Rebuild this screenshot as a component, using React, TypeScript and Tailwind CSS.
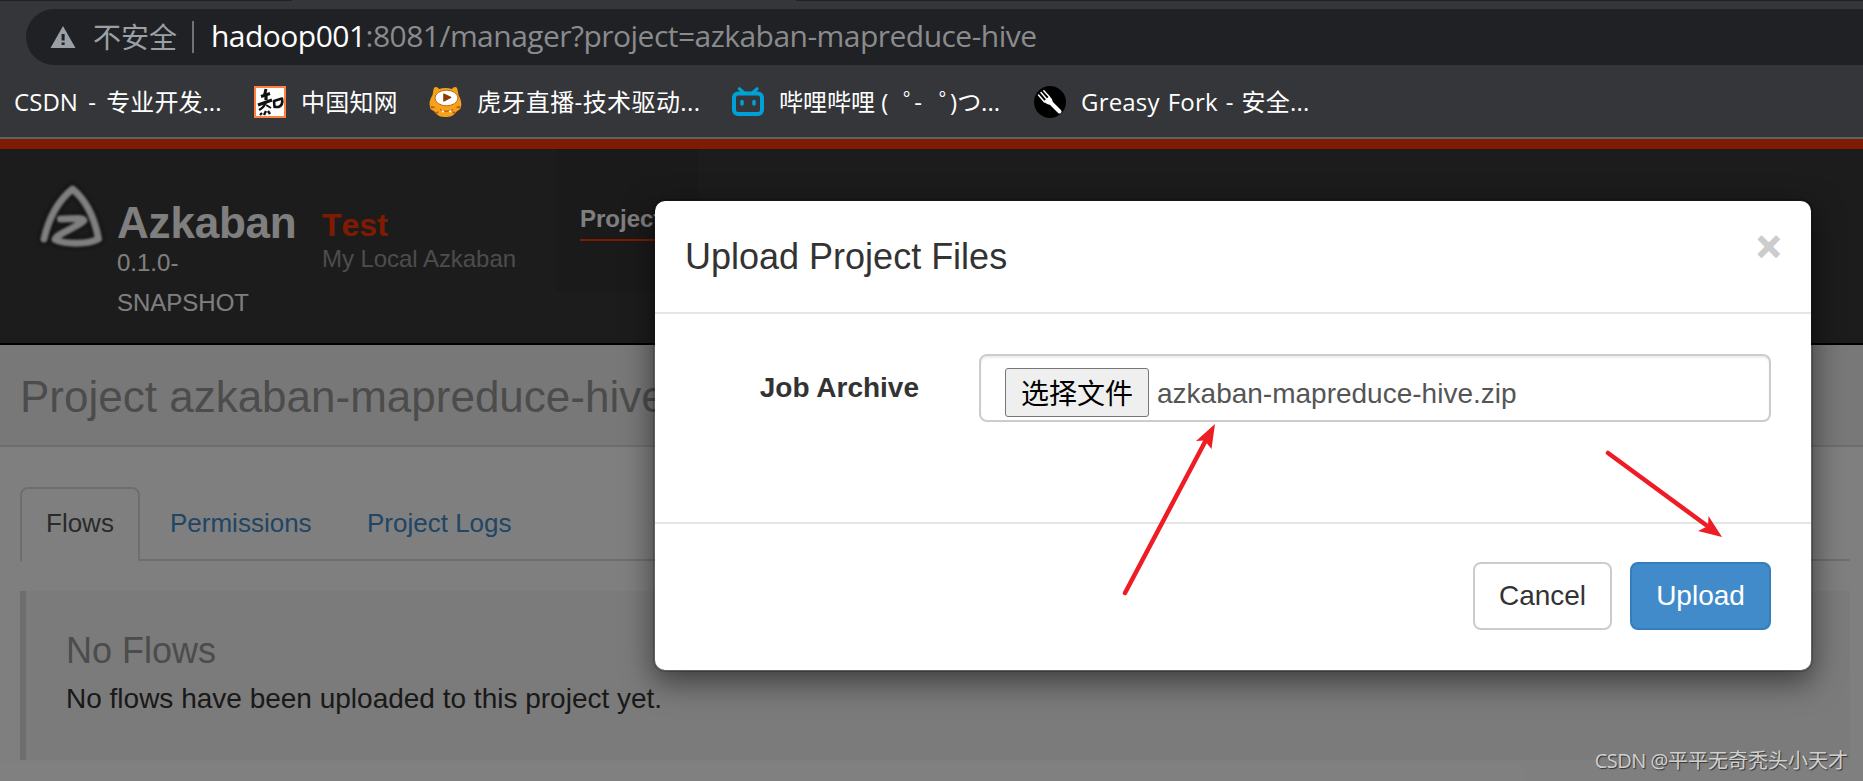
import type { ReactNode } from 'react';

function WarningIcon() {
    return (
        <svg width="26" height="22" viewBox="0 0 26 22" className="shrink-0">
            <path d="M13 0 L25.5 22 H0.5 Z" fill="#9aa0a6" />
            <path d="M11.6 8 h3 v6.5 h-3 z M11.6 16.5 h3 v2.6 h-3 z" fill="#202124" />
        </svg>
    );
}

function CnkiIcon() {
    return (
        <svg width="32" height="32" viewBox="0 0 32 32" className="shrink-0">
            <rect x="1" y="1" width="30" height="30" fill="#fff" stroke="#ff8040" strokeWidth="2" />
            <g fill="none" stroke="#111" strokeWidth="2" strokeLinejoin="round">
                <path d="M12 3 L10.500 9 M7 10.500 L16 7.500" strokeWidth="3" />
                <path d="M12 7 V14 M4 19 L18 14" strokeWidth="3.200" />
                <path d="M12 15 C11 20 9 22 5 24 M10 29 L12 25 M16 28 L14 25 M6 29 L8 27" strokeWidth="2.400" />
                <path d="M12 19 L17 22" strokeWidth="2" />
                <path d="M20 15 L28 12.500 C29 17 27 20 24.500 21 L20.500 21 Z" strokeWidth="2.600" />
            </g>
        </svg>
    );
}

function HuyaIcon() {
    return (
        <svg width="33" height="31" viewBox="0 0 33 31" className="shrink-0">
            <path
                d="M5 2 C6 0 9 1 10 3 C14 1.5 19 1.5 23 3 C24 1 27 0 28 2 C29 5 29 7 29.500 9 C32 13 33 18 32 21 C31 24 30 24 28 25 C25 30 21 31 16.500 31 C12 31 8 30 5 25 C2 24 1 23 .8 20 C0 17 1 13 3.500 9 C4 7 4 5 5 2 Z"
                fill="#f7a11b"
            />
            <path d="M1.500 20 L7 21 L2.500 22.500 Z M31.500 20 L26 21 L30.500 22.500 Z M6 26 L10 25.500 L8 28 Z M27 26 L23 25.500 L25 28 Z" fill="#b5560a" />
            <ellipse cx="17.500" cy="12" rx="11.500" ry="7.800" fill="#fff" stroke="#c06a10" strokeWidth="1" />
            <path d="M15 7.500 C14.500 7.200 14.200 7.500 14.200 8 V15 C14.200 15.700 14.700 15.900 15.300 15.500 L22 12 C22.600 11.600 22.600 11.200 22 10.800 Z" fill="#8a3c07" />
            <path d="M11 23.500 C15 25.800 20 25.800 24 23.500" fill="none" stroke="#a34a08" strokeWidth="1" />
            <path d="M12.500 24 L15.500 25 L13.600 27 Z M22.500 24 L19.500 25 L21.400 27 Z" fill="#fff" />
        </svg>
    );
}

function BilibiliIcon() {
    return (
        <svg width="32" height="29" viewBox="0 0 32 29" className="shrink-0">
            <g fill="none" stroke="#00a1d6" strokeLinecap="round">
                <path d="M7.500 1.800 L11.500 5.500 M25 1.800 L21 5.500" strokeWidth="3.200" />
                <rect x="2" y="6.500" width="28" height="20.500" rx="4" strokeWidth="4" />
                <path d="M10 14.500 V17 M22 14.500 V17" strokeWidth="3.600" />
            </g>
        </svg>
    );
}

function ForkIcon() {
    return (
        <svg width="32" height="32" viewBox="0 0 32 32" className="shrink-0">
            <circle cx="16" cy="16" r="16" fill="#000" />
            <path d="M17 17 L25.500 25.500" stroke="#fff" strokeWidth="4" strokeLinecap="round" />
            <path d="M10 15 L15 10.500 C18 12 19 14 18.500 18.500 C14 19 12 18 10 15 Z" fill="#fff" />
            <path d="M4.500 9 L10.500 16 M7 6.500 L13 13.500 M9.800 4.800 L15.500 11" stroke="#fff" strokeWidth="1.500" strokeLinecap="round" />
        </svg>
    );
}

const logoPath =
    'M44 239 C49 217 59 200 72.500 189 C87 201 95 220 98.500 239 C88 244.500 64 244.500 55 239.500 C56 234 80 226 84 220.500 C83 217 70 219 60.500 219';

function AzkabanLogo() {
    return (
        <svg width="76" height="76" viewBox="34 178 76 76" className="shrink-0">
            <g fill="none" strokeLinecap="round" strokeLinejoin="round">
                <path d={logoPath} stroke="#000" strokeOpacity="0.35" strokeWidth="12" className="blur-[2px]" />
                <path d={logoPath} stroke="#fff" strokeWidth="7" className="blur-[0.8px]" />
            </g>
        </svg>
    );
}

interface BookmarkProps {
    icon?: ReactNode;
    className: string;
    children: ReactNode;
}

function Bookmark({ icon, className, children }: BookmarkProps) {
    return (
        <div className={`flex items-center shrink-0 gap-[15px] ${className}`}>
            {icon}
            <span className="whitespace-nowrap">{children}</span>
        </div>
    );
}

function BrowserChrome() {
    return (
        <div className="h-[139px] bg-[#35363a] border-b-2 border-[#5f6368] flex flex-col font-['Open_Sans','Noto_Sans_CJK_SC',sans-serif]">
            <div className="flex justify-between h-px mb-2">
                <div className="w-[292px] bg-[#202124]" />
                <div className="w-[1067px] bg-[#202124]" />
            </div>
            <div className="ml-[26px] h-14 shrink-0 rounded-l-full bg-[#202124] flex items-center pl-6 text-[30px]">
                <WarningIcon />
                <span className="ml-[17px] w-[86px] text-[28px] text-[#9aa0a6] whitespace-nowrap">不安全</span>
                <div className="ml-[13px] w-0.5 h-8 bg-[#6f7276]" />
                <span className="ml-[17px] pb-[3px] tracking-[-0.53px] text-[#8a8b8d] whitespace-nowrap">
                    <span className="text-white">hadoop001</span>:8081/manager?project=azkaban-mapreduce-hive
                </span>
            </div>
            <div className="flex items-center h-[72px] pt-px pl-3.5 text-2xl text-white">
                <Bookmark className="w-[240px] [word-spacing:4px] tracking-[0.05px]">CSDN - 专业开发...</Bookmark>
                <Bookmark className="w-[175px] tracking-[0.2px]" icon={<CnkiIcon />}>中国知网</Bookmark>
                <Bookmark className="w-[303px] tracking-[0.4px]" icon={<HuyaIcon />}>虎牙直播-技术驱动...</Bookmark>
                <Bookmark className="w-[302px]" icon={<BilibiliIcon />}>
                    哔哩哔哩 (<span className="pl-[15px] tracking-[-13px]">゜</span>-<span className="pl-[17px] tracking-[-13px]">゜</span>)つ...
                </Bookmark>
                <Bookmark className="w-[300px] [word-spacing:1.5px] tracking-[0.2px]" icon={<ForkIcon />}>Greasy Fork - 安全...</Bookmark>
            </div>
        </div>
    );
}

function SiteHeader() {
    return (
        <div className="h-[206px] border-t-[10px] border-t-[#ff3600] border-b-2 border-b-black bg-[#393939] flex items-start">
            <div className="pl-[34px] pt-[29px] w-[117px]">
                <AzkabanLogo />
            </div>
            <div className="w-[205px] pt-[52px] text-white">
                <div className="h-[42px] text-[44px] leading-[44px] font-bold tracking-[-0.2px]">Azkaban</div>
                <div className="w-[140px] text-2xl leading-[40px]">0.1.0-SNAPSHOT</div>
            </div>
            <div className="w-[234px] pt-[59px]">
                <div className="text-[32px] leading-[34px] font-bold text-[#ff3600] [font-kerning:none]">Test</div>
                <div className="text-2xl leading-[33px] tracking-[-0.05px] text-[#999]">My Local Azkaban</div>
            </div>
            <div className="w-[143px] h-[142px] bg-[#343434] pt-[49px] px-6">
                <div className="h-[43px] border-b-2 border-[#ff3600] text-2xl leading-[41px] font-bold text-white">Projects</div>
            </div>
        </div>
    );
}

function ProjectPage() {
    return (
        <div className="flex-1 bg-white">
            <div className="h-[102px] bg-[#f1f1f1] border-b-2 border-[#ddd] pl-5">
                <h1 className="text-[44px] leading-[104px] text-[#999] whitespace-nowrap">Project azkaban-mapreduce-hive</h1>
            </div>
            <div className="pl-5 pr-[13px] pt-10">
                <div className="flex text-[26px] leading-[68px] h-[74px]">
                    <div className="w-[120px] shrink-0 border-2 border-b-0 border-[#ddd] rounded-t-lg pl-6 text-[#555]">Flows</div>
                    <div className="flex-1 flex border-b-2 border-[#ddd] pt-0.5 text-[#428bca]">
                        <div className="pl-[30px] w-[227px]">Permissions</div>
                        <div>Project Logs</div>
                    </div>
                </div>
                <div className="mt-[30px] h-[169px] border-l-[6px] border-[#ddd] bg-[#f6f6f6] pl-10 pt-[38px]">
                    <h4 className="text-[36px] leading-[44px] text-[#999]">No Flows</h4>
                    <p className="mt-1.5 text-[28px] leading-[40px] text-[#333]">No flows have been uploaded to this project yet.</p>
                </div>
            </div>
        </div>
    );
}

function UploadModal() {
    return (
        <div className="absolute left-[653px] top-[199px] w-[1160px] h-[473px] flex flex-col rounded-xl border-2 border-black/20 bg-white bg-clip-padding shadow-[0_10px_30px_rgba(0,0,0,0.5)] text-[#333]">
            <div className="h-[113px] border-b-2 border-[#e5e5e5] flex justify-between pl-[30px] pr-[30px]">
                <h4 className="text-[36px] leading-[111px]">Upload Project Files</h4>
                <button className="h-[92px] text-[42px] leading-[92px] font-bold text-[#ccc] [-webkit-text-stroke:1.2px_#ccc]">×</button>
            </div>
            <div className="h-[208px] pt-10 pr-10 flex items-start">
                <label className="w-[264px] text-right text-[28px] leading-[67px] font-bold">Job Archive</label>
                <div className="ml-[60px] flex-1 h-[68px] flex pt-3 pl-6 rounded-lg border-2 border-[#ccc] shadow-[inset_0_2px_2px_rgba(0,0,0,0.075)]">
                    <button className="w-[144px] h-[49px] rounded-[3px] border border-[#767676] bg-[#efefef] text-[28px] leading-[47px] text-black font-['Noto_Sans_CJK_SC',sans-serif]">
                        选择文件
                    </button>
                    <span className="ml-2 text-[28px] leading-[52px] text-[#555]">azkaban-mapreduce-hive.zip</span>
                </div>
            </div>
            <div className="flex-1 border-t-2 border-[#e5e5e5] pt-[38px] pr-10 flex justify-end gap-[18px] text-[28px]">
                <button className="w-[139px] h-[68px] rounded-lg border-2 border-[#ccc] bg-white text-[#333]">Cancel</button>
                <button className="w-[141px] h-[68px] rounded-lg border-2 border-[#357ebd] bg-[#428bca] text-white">Upload</button>
            </div>
        </div>
    );
}

// Red pointers drawn over the dialog
function Arrows() {
    return (
        <svg width="1863" height="781" viewBox="0 0 1863 781" className="absolute left-0 top-0">
            <g stroke="#ee1c25" strokeWidth="4.500" strokeLinecap="round">
                <path d="M1125 593 L1206 440" />
                <path d="M1608 453 L1706 525" />
            </g>
            <path d="M1215 424 L1196 441 L1204.500 440.500 L1211.500 449 Z" fill="#ee1c25" />
            <path d="M1722 537 L1708.500 516 L1708 526 L1698 531 Z" fill="#ee1c25" />
        </svg>
    );
}

export default function App() {
    return (
        <div className="relative w-[1863px] h-[781px] overflow-hidden flex flex-col font-['Liberation_Sans','Noto_Sans_CJK_SC',sans-serif]">
            <BrowserChrome />
            <div className="flex-1 flex flex-col">
                <SiteHeader />
                <ProjectPage />
            </div>
            <div className="absolute inset-x-0 top-[139px] bottom-0 bg-black/50" />
            <UploadModal />
            <Arrows />
            <div className="absolute right-[15px] bottom-[5px] text-[20px] leading-[30px] text-[#d0d0d0] whitespace-nowrap font-['Open_Sans','Noto_Sans_CJK_SC',sans-serif] [text-shadow:1px_1px_1px_rgba(0,0,0,0.6)]">
                <span className="tracking-[-0.5px]">CSDN @</span>平平无奇秃头小天才
            </div>
        </div>
    );
}
